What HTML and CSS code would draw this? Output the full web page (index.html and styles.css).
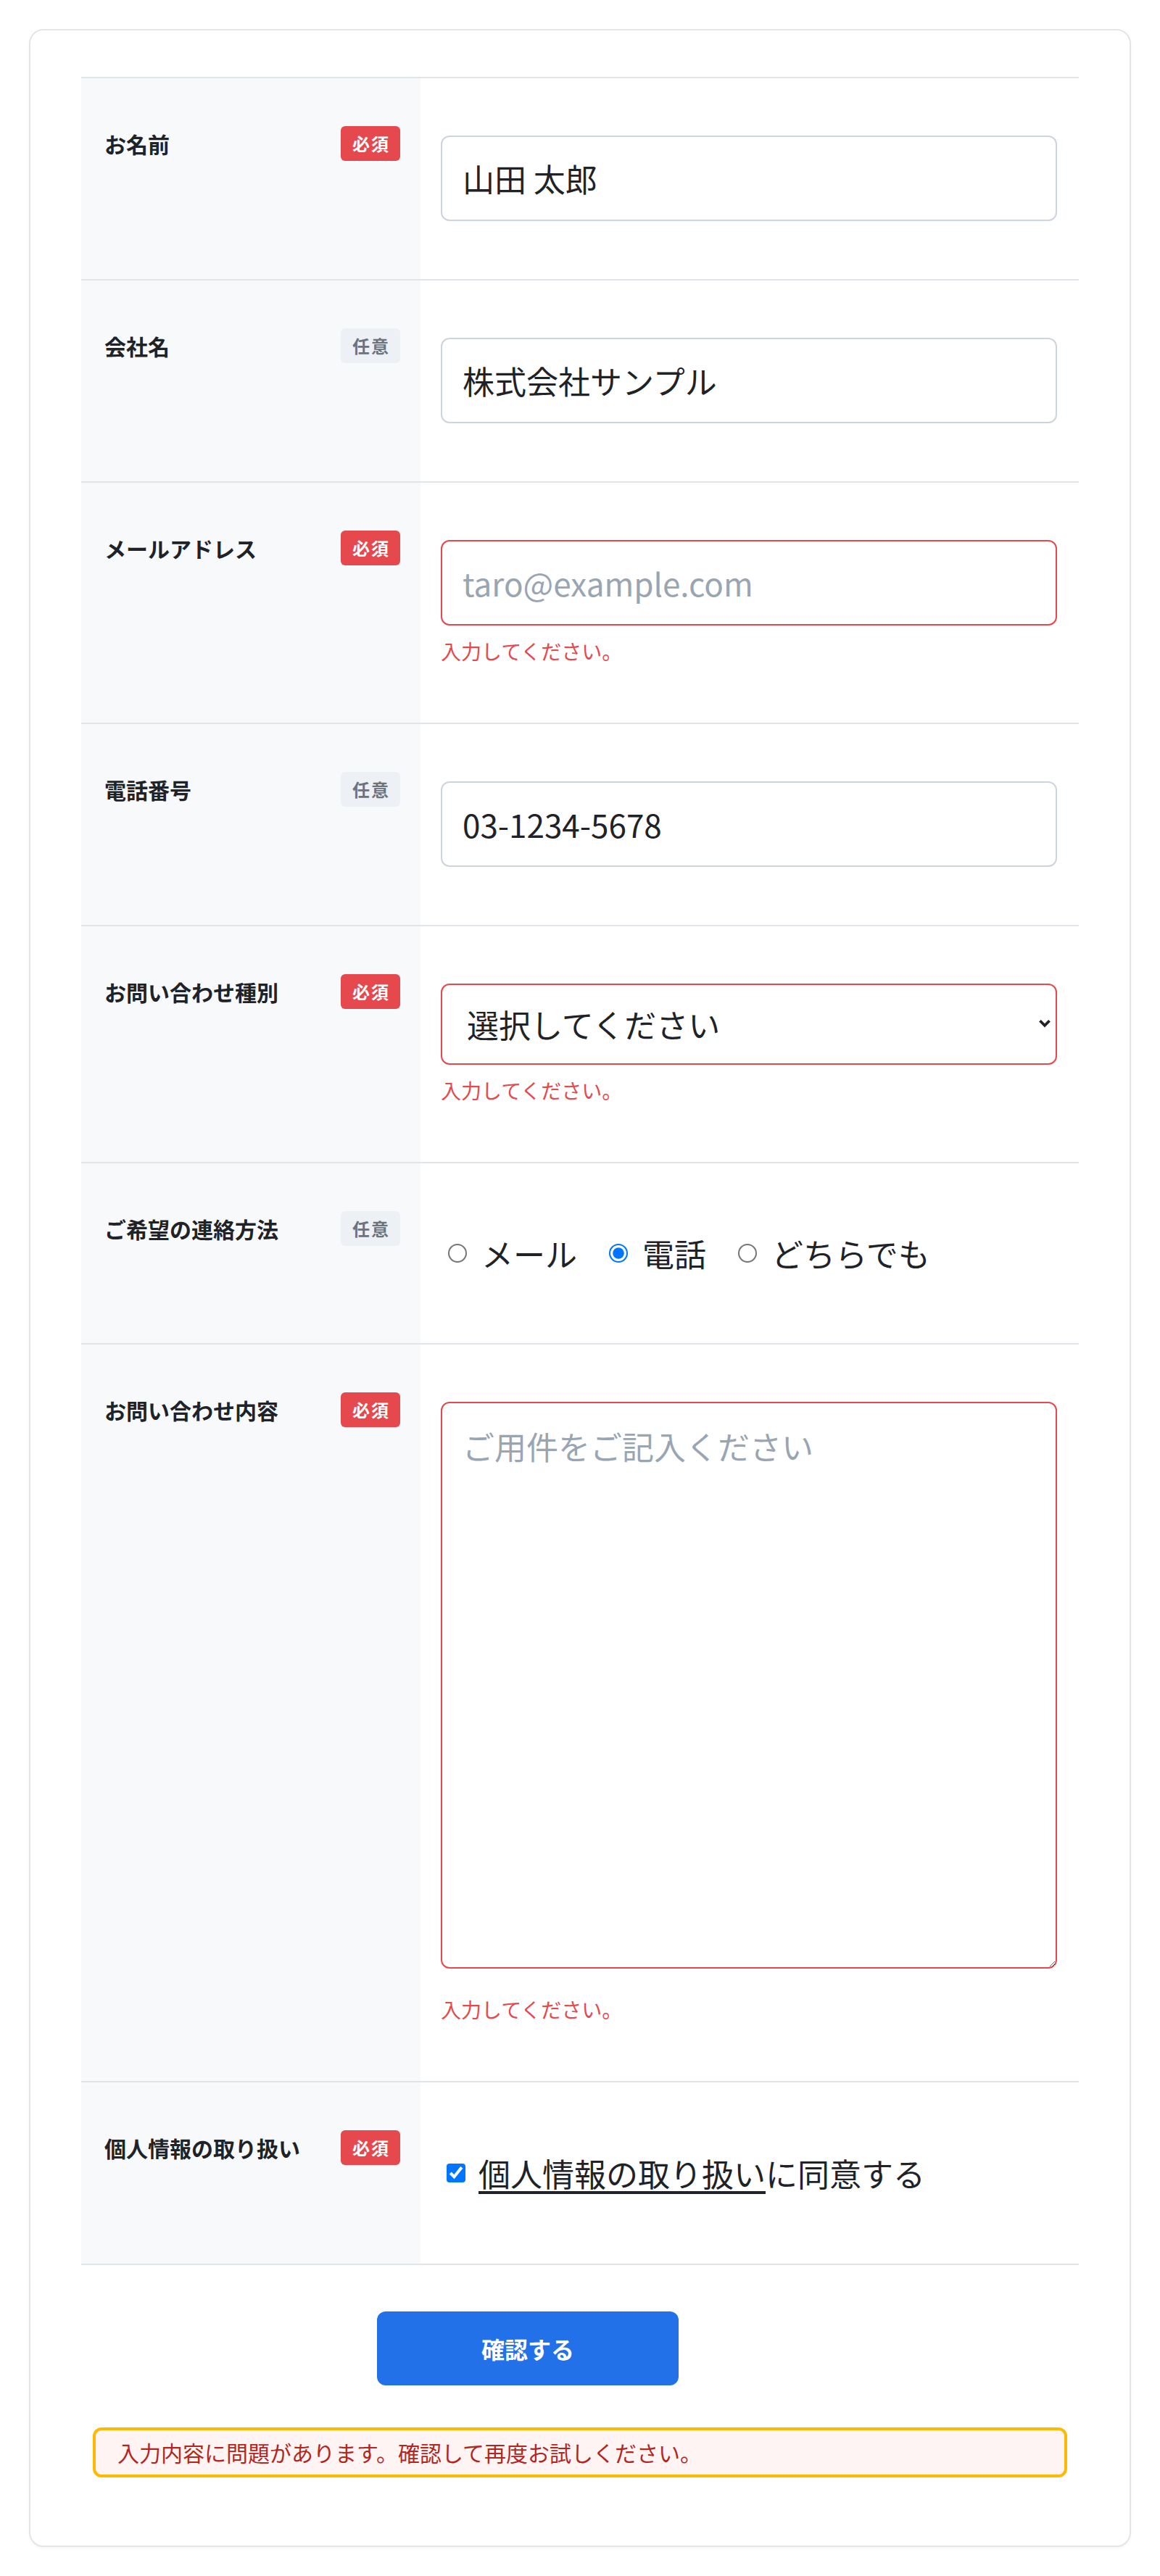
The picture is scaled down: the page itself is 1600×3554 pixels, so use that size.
FILE: index.html
```html
<!DOCTYPE html>
<html lang="ja">
<head>
<meta charset="utf-8">
<title>お問い合わせフォーム</title>
<link rel="stylesheet" href="styles.css">
</head>
<body>
<div class="page">
  <form class="card" novalidate>
    <div class="form-table">
      <div class="row">
        <div class="th"><span class="label">お名前</span><span class="badge req">必須</span></div>
        <div class="td"><input class="field" type="text" value="山田 太郎"></div>
      </div>
      <div class="row">
        <div class="th"><span class="label">会社名</span><span class="badge opt">任意</span></div>
        <div class="td"><input class="field" type="text" value="株式会社サンプル"></div>
      </div>
      <div class="row">
        <div class="th"><span class="label">メールアドレス</span><span class="badge req">必須</span></div>
        <div class="td">
          <input class="field is-error" type="email" placeholder="taro@example.com">
          <p class="err">入力してください。</p>
        </div>
      </div>
      <div class="row">
        <div class="th"><span class="label">電話番号</span><span class="badge opt">任意</span></div>
        <div class="td"><input class="field" type="tel" value="03-1234-5678"></div>
      </div>
      <div class="row">
        <div class="th"><span class="label">お問い合わせ種別</span><span class="badge req">必須</span></div>
        <div class="td">
          <div class="select-wrap">
            <select class="field select is-error">
              <option selected>選択してください</option>
              <option>製品について</option>
              <option>サービスについて</option>
              <option>その他</option>
            </select>
            <svg class="chevron" viewBox="0 0 10 7" width="9" height="6" aria-hidden="true"><path d="M1.2 1.3 L5 5.1 L8.8 1.3" fill="none" stroke="#1f2328" stroke-width="2.2" stroke-linecap="butt" stroke-linejoin="miter"/></svg>
          </div>
          <p class="err">入力してください。</p>
        </div>
      </div>
      <div class="row">
        <div class="th"><span class="label">ご希望の連絡方法</span><span class="badge opt">任意</span></div>
        <div class="td">
          <div class="radios">
            <label class="radio"><input type="radio" name="contact">メール</label>
            <label class="radio"><input type="radio" name="contact" checked>電話</label>
            <label class="radio"><input type="radio" name="contact">どちらでも</label>
          </div>
        </div>
      </div>
      <div class="row">
        <div class="th"><span class="label">お問い合わせ内容</span><span class="badge req">必須</span></div>
        <div class="td">
          <textarea class="field area is-error" placeholder="ご用件をご記入ください"></textarea>
          <p class="err err-area">入力してください。</p>
        </div>
      </div>
      <div class="row">
        <div class="th"><span class="label">個人情報の取り扱い</span><span class="badge req">必須</span></div>
        <div class="td">
          <label class="agree"><input type="checkbox" checked><span><a href="#" class="link">個人情報の取り扱い</a>に同意する</span></label>
        </div>
      </div>
    </div>
    <div class="actions">
      <button type="button" class="submit">確認する</button>
    </div>
    <div class="alert">入力内容に問題があります。確認して再度お試しください。</div>
  </form>
</div>
</body>
</html>
```

FILE: styles.css
```css
html {
  background: #ffffff;
}

body {
  margin: 0;
  zoom: 2;
  font-family: "Noto Sans CJK JP", "Noto Sans", sans-serif;
  color: #1f2328;
  background: #ffffff;
}

.page {
  padding: 20px;
}

.card {
  display: block;
  border: 1px solid #e2e5e9;
  border-radius: 10px;
  background: #ffffff;
  padding: 32px 35px 47px;
  box-shadow: 0 1px 2px rgba(15, 23, 42, 0.04);
}

.form-table {
  border-top: 1px solid #e1e4e8;
}

.row {
  display: grid;
  grid-template-columns: 234px 1fr;
  border-bottom: 1px solid #e1e4e8;
}

.th {
  background: #f8f9fb;
  padding: 32px 14px 32px 16px;
  display: flex;
  justify-content: space-between;
  align-items: flex-start;
}

.label {
  font-size: 15px;
  font-weight: 700;
  line-height: 26px;
  color: #1f2328;
}

.badge {
  margin-top: 1px;
  height: 24px;
  padding: 0 7px 0 8px;
  display: inline-flex;
  align-items: center;
  font-size: 12px;
  font-weight: 700;
  letter-spacing: 1px;
  border-radius: 3px;
  line-height: 1;
}

.badge.req {
  background: #e5484d;
  color: #ffffff;
}

.badge.opt {
  background: #edf0f4;
  color: #6b7380;
}

.td {
  padding: 39.5px 15px 40px 14px;
}

.field {
  display: block;
  width: 100%;
  box-sizing: border-box;
  height: 59px;
  margin: 0;
  padding: 0 14px;
  border: 1px solid #cdd4dc;
  border-radius: 6px;
  background: #ffffff;
  font-family: inherit;
  font-size: 22px;
  color: #1f2328;
}

.field::placeholder {
  color: #9aa5b2;
}

.field.is-error {
  border-color: #e5484d;
}

.select-wrap {
  position: relative;
}

.select {
  -webkit-appearance: none;
  appearance: none;
  height: 56px;
  padding: 0 24px 0 17px;
}

.chevron {
  position: absolute;
  right: 4px;
  top: 24.5px;
  pointer-events: none;
}

.area {
  height: 391px;
  padding: 13px 14px;
  line-height: 1.5;
  resize: vertical;
}

.err {
  margin: 8px 0 0;
  font-size: 14px;
  line-height: 19px;
  color: #e5484d;
}

.err.err-area {
  margin-top: 18.5px;
}

.radios {
  height: 44.5px;
  display: flex;
  align-items: center;
  gap: 17px;
}

.radio {
  display: inline-flex;
  align-items: center;
  font-size: 22px;
  line-height: 30px;
  color: #1f2328;
}

.radio input {
  margin: 0 10px 0 5px;
}

.agree {
  height: 45.5px;
  display: flex;
  align-items: center;
  font-size: 22px;
  line-height: 30px;
  color: #1f2328;
}

.agree input {
  margin: 0 9px 0 4px;
}

.link {
  color: #1f2328;
  text-decoration: underline;
  text-underline-offset: 3px;
}

.actions {
  margin-top: 32px;
  padding-right: 72px;
  display: flex;
  justify-content: center;
}

.submit {
  width: 208px;
  height: 51px;
  border: none;
  border-radius: 6px;
  background: #2271e8;
  color: #ffffff;
  font-family: inherit;
  font-size: 16px;
  font-weight: 700;
  cursor: pointer;
}

.alert {
  margin: 29px 8px 0;
  border: 2px solid #ffb900;
  border-radius: 6px;
  background: #fff4f4;
  padding: 6px 15px;
  font-size: 15px;
  line-height: 18.5px;
  color: #b3261e;
}
```
